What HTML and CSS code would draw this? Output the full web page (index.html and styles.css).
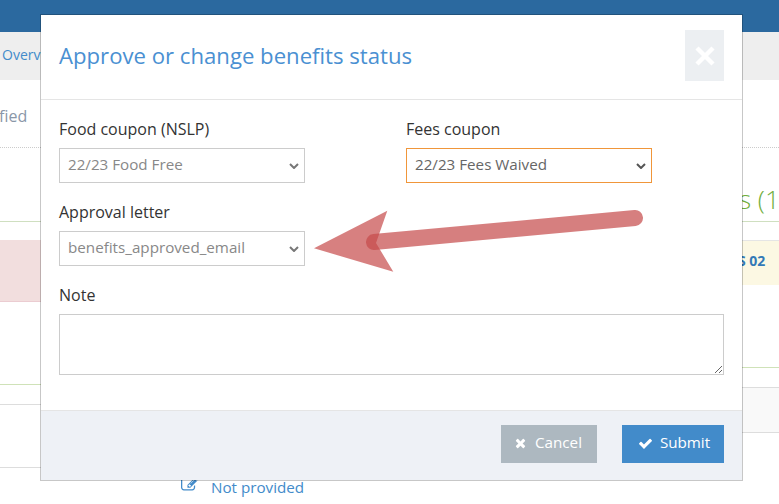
FILE: index.html
```html
<!DOCTYPE html>
<html lang="en">
<head>
<meta charset="utf-8">
<title>Approve or change benefits status</title>
<link rel="stylesheet" href="styles.css">
</head>
<body>
<div class="page">
  <div class="topbar"></div>
  <nav class="nav"><a class="nav-link">Overview</a></nav>
  <div class="status-row"><span class="status-text">fied</span></div>
  <div class="columns">
    <section class="col">
      <div class="col-head"></div>
      <div class="band band-pink"></div>
      <div class="rule-green rule-left"></div>
      <div class="rule-grey"></div>
      <div class="plain-row"></div>
      <div class="provided">
        <svg class="edit-icon" viewBox="0 0 1792 1792" aria-hidden="true"><path d="M888 1184l116-116-152-152-116 116v56h96v96h56zm440-720q-16-16-33 1l-350 350q-17 17-1 33t33-1l350-350q17-17 1-33zm80 594v190q0 119-84.500 203.500t-203.500 84.500h-832q-119 0-203.500-84.500t-84.500-203.500v-832q0-119 84.500-203.500t203.500-84.500h832q63 0 117 25 15 7 18 23 3 17-9 29l-49 49q-14 14-32 8-23-6-45-6h-832q-66 0-113 47t-47 113v832q0 66 47 113t113 47h832q66 0 113-47t47-113v-126q0-13 9-22l64-64q15-15 35-9t20 22zm-96-738l288 288-672 672h-288v-288zm444 132l-92 92-288-288 92-92q28-28 68-28t68 28l152 152q28 28 28 68t-28 68z"/></svg>
        <span>Not provided</span>
      </div>
    </section>
    <section class="col">
      <div class="col-head col-head-right"><h2 class="col-title">s (1)</h2></div>
      <div class="band band-cream"><span class="band-text">S 02</span></div>
      <div class="rule-green rule-right"></div>
      <div class="grey-row"></div>
    </section>
  </div>

  <div class="modal" role="dialog">
    <header class="modal-head">
      <h1 class="modal-title">Approve or change benefits status</h1>
      <button class="close" type="button" aria-label="Close">
        <svg viewBox="0 0 20 20" aria-hidden="true"><path d="M2 2 18 18M18 2 2 18"/></svg>
      </button>
    </header>
    <form class="modal-body">
      <div class="field-grid">
        <div class="field">
          <label class="label">Food coupon (NSLP)</label>
          <select class="select"><option>22/23 Food Free</option></select>
        </div>
        <div class="field">
          <label class="label">Fees coupon</label>
          <select class="select select-changed"><option>22/23 Fees Waived</option></select>
        </div>
        <div class="field">
          <label class="label">Approval letter</label>
          <select class="select"><option>benefits_approved_email</option></select>
        </div>
      </div>
      <div class="field">
        <label class="label">Note</label>
        <textarea class="note"></textarea>
      </div>
    </form>
    <footer class="modal-foot">
      <button class="btn btn-cancel" type="button">
        <svg class="btn-icon" viewBox="0 0 1408 1792" aria-hidden="true"><path d="M1298 1322q0 40-28 68l-136 136q-28 28-68 28t-68-28l-294-294-294 294q-28 28-68 28t-68-28l-136-136q-28-28-28-68t28-68l294-294-294-294q-28-28-28-68t28-68l136-136q28-28 68-28t68 28l294 294 294-294q28-28 68-28t68 28l136 136q28 28 28 68t-28 68l-294 294 294 294q28 28 28 68z"/></svg>
        Cancel
      </button>
      <button class="btn btn-submit" type="button">
        <svg class="btn-icon" viewBox="0 0 1792 1792" aria-hidden="true"><path d="M1671 566q0 40-28 68l-724 724-136 136q-28 28-68 28t-68-28l-136-136-362-362q-28-28-28-68t28-68l136-136q28-28 68-28t68 28l294 295 656-657q28-28 68-28t68 28l136 136q28 28 28 68z"/></svg>
        Submit
      </button>
    </footer>
  </div>

  <svg class="arrow" viewBox="0 0 779 504" aria-hidden="true">
    <polygon class="arrow-part" points="314,248.300 387.300,210.700 376,243 393.300,271.700"/>
    <line class="arrow-part arrow-shaft" x1="374" y1="242" x2="635" y2="218"/>
  </svg>
</div>
</body>
</html>
```
FILE: styles.css
```css
* { box-sizing: border-box; }

html, body {
  margin: 0;
  height: 504px;
  overflow: hidden;
  background: #fff;
  font-family: "Open Sans", "Noto Sans", sans-serif;
  font-size: 15.2px;
  color: #333;
}

.page {
  position: relative;
  height: 504px;
  overflow: hidden;
}

.topbar { height: 32px; background: #2b699f; }

.nav {
  height: 48px;
  padding: 0 0 3px 2px;
  display: flex;
  align-items: center;
  background: #eee;
}
.nav-link { color: #428bca; font-size: 14px; }

.status-row {
  height: 68px;
  padding-top: 25px;
  border-bottom: 1px dotted #ccc;
  color: #8a97a8;
  font-size: 16px;
  line-height: 22px;
}
.status-text { display: block; margin-left: -1px; }

.columns {
  display: grid;
  grid-template-columns: 390px 389px;
}

.col-head {
  height: 74px;
  border-bottom: 1px solid #cfdfc0;
}
.col-head-right { padding: 35px 0 0 349px; }
.col-title {
  margin: 0;
  font-size: 26px;
  font-weight: 300;
  line-height: 32px;
  color: #6fae3c;
  white-space: nowrap;
}

.band { margin-top: 18px; }
.band-pink {
  height: 62px;
  background: #f2dede;
  border-bottom: 1px solid #ebccd1;
}
.band-cream {
  height: 45px;
  background: #fcf8e3;
  border-top: 1px solid #e5e5e5;
  padding: 9px 0 0 348px;
}
.band-text {
  color: #337ab7;
  font-weight: 700;
  font-size: 14px;
  line-height: 22px;
}

.rule-green { border-top: 1px solid #cfe2b8; }
.rule-left { margin-top: 82px; }
.rule-right { margin-top: 82px; }

.rule-grey { margin-top: 19px; border-top: 1px solid #ddd; }
.plain-row { height: 63px; border-bottom: 1px solid #ddd; }

.grey-row {
  margin-top: 19px;
  height: 46px;
  background: #f9f9f9;
  border-top: 1px solid #ddd;
  border-bottom: 1px solid #ddd;
}

.provided {
  margin-top: 8px;
  padding-left: 181px;
  display: flex;
  align-items: center;
  gap: 12px;
  color: #428bca;
  font-size: 15.2px;
  line-height: 22px;
}
.edit-icon { width: 18px; height: 18px; fill: #428bca; margin-top: -6px; }

/* Modal */
.modal {
  position: absolute;
  left: 40px;
  top: 14px;
  width: 703px;
  height: 467px;
  background: #fff;
  border: 1px solid rgba(0, 0, 0, 0.22);
  background-clip: padding-box;
  display: flex;
  flex-direction: column;
}

.modal-head {
  height: 85px;
  flex: none;
  padding: 15px 18px 0;
  border-bottom: 1px solid #e5e5e5;
  display: flex;
  justify-content: space-between;
  align-items: flex-start;
}
.modal-title {
  margin: 10px 0 0;
  font-size: 22.15px;
  font-weight: 400;
  line-height: 30px;
  color: #4a90d2;
}
.close {
  width: 39px;
  height: 51px;
  padding: 0;
  border: 0;
  background: #eceff2;
  display: flex;
  align-items: center;
  justify-content: center;
}
.close svg {
  width: 20px;
  height: 20px;
  fill: none;
  stroke: #fff;
  stroke-width: 4.5;
}

.modal-body {
  flex: 1;
  padding: 19px 18px 0;
}
.field-grid {
  display: grid;
  grid-template-columns: 347px 318px;
  row-gap: 19px;
  margin-bottom: 19px;
}
.field { display: flex; flex-direction: column; align-items: flex-start; }

.label {
  display: block;
  margin-bottom: 9px;
  font-size: 16px;
  line-height: 20px;
  color: #333;
}

.select {
  appearance: none;
  -webkit-appearance: none;
  width: 246px;
  height: 35px;
  padding: 0 20px 4px 8px;
  border: 1px solid #ccc;
  border-radius: 0;
  background-color: #fff;
  background-image: url("data:image/svg+xml,%3Csvg xmlns='http://www.w3.org/2000/svg' viewBox='0 0 10 6'%3E%3Cpath d='M1 1l4 4 4-4' fill='none' stroke='%23777' stroke-width='2'/%3E%3C/svg%3E");
  background-repeat: no-repeat;
  background-size: 10px 6px;
  background-position: right 4.7px center;
  color: #888;
  font-family: "Open Sans", "Noto Sans", sans-serif;
  font-size: 15.2px;
  outline: none;
}
.select-changed {
  border-color: #f0963a;
  color: #666;
  background-image: url("data:image/svg+xml,%3Csvg xmlns='http://www.w3.org/2000/svg' viewBox='0 0 10 6'%3E%3Cpath d='M1 1l4 4 4-4' fill='none' stroke='%23555' stroke-width='2'/%3E%3C/svg%3E");
}

.note {
  display: block;
  width: 665px;
  height: 61px;
  border: 1px solid #ccc;
  border-radius: 0;
  outline: none;
  background: #fff;
}

.modal-foot {
  height: 70px;
  flex: none;
  padding: 14px 18px 0;
  background: #eef1f6;
  border-top: 1px solid #e5e5e5;
  display: flex;
  justify-content: flex-end;
  align-items: flex-start;
  gap: 25px;
}

.btn {
  height: 38px;
  border: 0;
  padding: 0 0 4px;
  display: flex;
  align-items: center;
  justify-content: center;
  gap: 8px;
  color: #fff;
  font-family: "Open Sans", "Noto Sans", sans-serif;
  font-size: 15.2px;
}
.btn-cancel { width: 96px; padding-right: 2px; background: #adb8c0; }
.btn-submit { width: 102px; padding-left: 2px; gap: 7px; background: #428bca; }
.btn-icon { width: 13px; height: 14px; fill: #fff; margin-top: 2px; }
.btn-submit .btn-icon { width: 15px; height: 15px; }

.arrow {
  position: absolute;
  left: 0;
  top: 0;
  width: 779px;
  height: 504px;
  pointer-events: none;
}
.arrow-part { fill: rgb(198, 74, 74); opacity: 0.7; }
.arrow-shaft {
  stroke: rgb(198, 74, 74);
  stroke-width: 16;
  stroke-linecap: round;
}
```
